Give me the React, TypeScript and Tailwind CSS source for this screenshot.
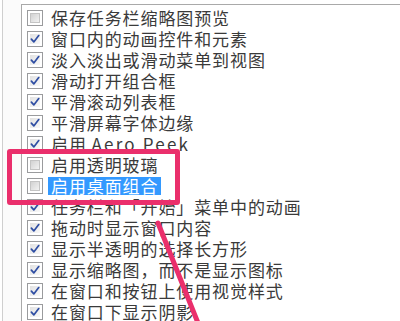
import React from "react"

type Item = { label: React.ReactNode; checked: boolean; selected?: boolean }

const items: Item[] = [
  { label: "保存任务栏缩略图预览", checked: false },
  { label: "窗口内的动画控件和元素", checked: true },
  { label: "淡入淡出或滑动菜单到视图", checked: true },
  { label: "滑动打开组合框", checked: true },
  { label: "平滑滚动列表框", checked: true },
  { label: "平滑屏幕字体边缘", checked: true },
  {
    label: (
      <>
        启用 <span className="tracking-[2.2px]">Aero Peek</span>
      </>
    ),
    checked: true,
  },
  { label: "启用透明玻璃", checked: false },
  { label: "启用桌面组合", checked: false, selected: true },
  { label: "任务栏和「开始」菜单中的动画", checked: true },
  { label: "拖动时显示窗口内容", checked: true },
  { label: "显示半透明的选择长方形", checked: true },
  { label: "显示缩略图，而不是显示图标", checked: true },
  { label: "在窗口和按钮上使用视觉样式", checked: true },
  { label: "在窗口下显示阴影", checked: true },
]

const Checkbox = ({ checked }: { checked: boolean }) => (
  <div className="flex h-[16px] w-[16px] shrink-0 items-center justify-center border border-[#9a9b9d] bg-white p-[2px]">
    <div
      className={
        checked
          ? "flex h-full w-full items-center justify-center bg-gradient-to-br from-[#e2e2e2] to-[#f8f8f8]"
          : "h-full w-full border border-[#c4c4c4] bg-gradient-to-br from-[#d2d2d2] to-[#f2f2f2]"
      }
    >
      {checked && (
        <svg width="11" height="10" viewBox="0 0 11 10">
          <path d="M1.5 5.2 L4.2 8.2 L9.6 1.2" fill="none" stroke="#2f4ea3" strokeWidth="1.9" strokeLinecap="round" strokeLinejoin="round" />
        </svg>
      )}
    </div>
  </div>
)

export default function App() {
  return (
    <div className="relative flex h-[321px] w-[400px] overflow-hidden bg-white pl-[2px] font-['Noto_Sans_CJK_SC',sans-serif] text-[17px] tracking-[0.9px] text-[#3a3a3a]">
      <div className="w-[19px] shrink-0 border-l border-[#cfcfcf] bg-[#fbfbfb]" />
      <div className="mt-[4px] flex-1 border-t border-l border-[#a9a9a9] pt-[2px] pl-[5px] shadow-[inset_1px_1px_0_#ffffff]">
        <ul className="flex flex-col">
          {items.map((item, i) => (
            <li key={i} className="flex h-[21px] items-center gap-[8px] whitespace-nowrap">
              <Checkbox checked={item.checked} />
              {item.selected ? (
                <span className="-ml-[3px] flex h-[18px] items-center bg-[#3399ff] px-[3px] leading-none text-white">{item.label}</span>
              ) : (
                <span className="leading-none">{item.label}</span>
              )}
            </li>
          ))}
        </ul>
      </div>

      <div className="absolute top-[149px] left-[7px] h-[56px] w-[173px] rounded-[3px] border-[5px] border-[#ea2f6c]" />
      <svg className="absolute top-0 left-0" width="400" height="321" viewBox="0 0 400 321">
        <line x1="158" y1="223" x2="200" y2="328" stroke="#ea2f6c" strokeWidth="5" strokeLinecap="round" />
      </svg>
    </div>
  )
}
